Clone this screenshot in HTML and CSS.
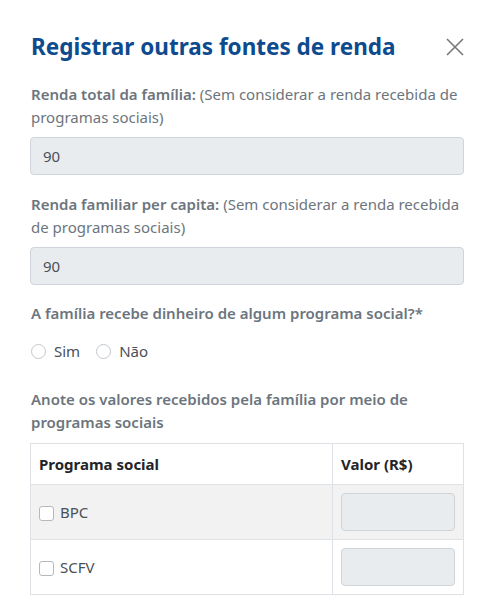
FILE: index.html
```html
<!DOCTYPE html>
<html lang="pt-BR">
<head>
<meta charset="utf-8">
<link rel="stylesheet" href="styles.css">
</head>
<body>
<div class="modal">
  <div class="header">
    <h1 class="title">Registrar outras fontes de renda</h1>
    <span class="close">
      <svg width="18" height="18" viewBox="0 0 18 18"><path d="M1 1L17 17M17 1L1 17" stroke="#777" stroke-width="1.6" fill="none"/></svg>
    </span>
  </div>

  <div class="field">
    <p class="label"><b>Renda total da família:</b> (Sem considerar a renda recebida de programas sociais)</p>
    <div class="input">90</div>
  </div>

  <div class="field">
    <p class="label"><b>Renda familiar per capita:</b> (Sem considerar a renda recebida de programas sociais)</p>
    <div class="input">90</div>
  </div>

  <p class="label question"><b>A família recebe dinheiro de algum programa social?*</b></p>
  <div class="radios">
    <label class="radio"><span class="circle"></span>Sim</label>
    <label class="radio"><span class="circle"></span>Não</label>
  </div>

  <p class="label note"><b>Anote os valores recebidos pela família por meio de programas sociais</b></p>

  <table class="table">
    <thead>
      <tr><th class="c1">Programa social</th><th class="c2">Valor (R$)</th></tr>
    </thead>
    <tbody>
      <tr class="odd"><td class="c1"><span class="check"></span>BPC</td><td class="c2"><div class="cell-input"></div></td></tr>
      <tr><td class="c1"><span class="check"></span>SCFV</td><td class="c2"><div class="cell-input"></div></td></tr>
    </tbody>
  </table>
</div>
</body>
</html>
```

FILE: styles.css
```css
* { box-sizing: border-box; }
body {
  margin: 0;
  background: #fff;
  font-family: "Noto Sans", "Open Sans", sans-serif;
  color: #212529;
}
.modal {
  padding: 30px 29px 0 30px;
}
.header {
  display: flex;
  justify-content: space-between;
  align-items: flex-start;
  margin-bottom: 19px;
}
.title {
  margin: 0;
  padding-left: 1px;
  font-size: 22.5px;
  line-height: 34px;
  font-weight: 700;
  color: #0d4a8e;
}
.close {
  display: flex;
  padding-top: 8px;
}
.label {
  margin: 0;
  padding-left: 1px;
  font-size: 15px;
  line-height: 23px;
  color: #6c757d;
}
.label b { font-weight: 600; }
.field { margin-bottom: 18px; }
.field .label { margin-bottom: 8px; }
.input {
  height: 38px;
  border: 1px solid #ced4da;
  border-radius: 4px;
  background: #e9ecef;
  padding: 0 12px;
  font-size: 15px;
  line-height: 36px;
  color: #495057;
}
.question { margin-top: -1px; }
.radios {
  display: flex;
  gap: 16px;
  margin-top: 15px;
  margin-bottom: 26px;
  padding-left: 1px;
}
.radio {
  display: flex;
  align-items: center;
  gap: 8px;
  font-size: 15px;
  line-height: 22px;
  color: #495057;
}
.circle {
  width: 15px;
  height: 15px;
  border: 1px solid #c4c8cc;
  border-radius: 50%;
  background: #fff;
}
.note { margin-bottom: 9px; }
.table {
  width: 434px;
  border-collapse: collapse;
  font-size: 15px;
}
.table th, .table td {
  border: 1px solid #dee2e6;
  text-align: left;
  vertical-align: middle;
}
.table th {
  height: 41px;
  padding: 0 8px;
  font-weight: 700;
  color: #212529;
}
.table td {
  height: 55px;
  padding: 0 8px;
  color: #495057;
}
.table .c2 { width: 131px; }
.table .odd td { background: #f2f2f2; }
.check {
  display: inline-block;
  vertical-align: -3px;
  width: 15px;
  height: 15px;
  border: 1px solid #b5b9bd;
  border-radius: 3px;
  background: #fff;
  margin-right: 6px;
}
.cell-input {
  height: 38px;
  border: 1px solid #ced4da;
  border-radius: 4px;
  background: #e9ecef;
}
```
